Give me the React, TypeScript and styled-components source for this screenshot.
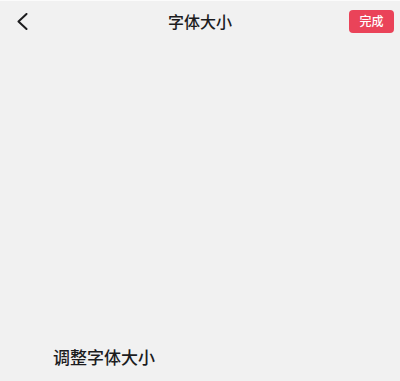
import styled, { createGlobalStyle } from 'styled-components';

const GlobalStyle = createGlobalStyle`
  html, body {
    margin: 0;
    padding: 0;
    background: #f1f1f1;
  }
  body {
    font-family: "Noto Sans CJK SC", "Noto Sans", sans-serif;
    color: #1c1c1e;
  }
`;

const Page = styled.div`
  width: 400px;
  height: 381px;
  box-sizing: border-box;
  border-top: 1px solid #fbfbfb;
  background: #f1f1f1;
  display: flex;
  flex-direction: column;
  overflow: hidden;
`;

const Header = styled.div`
  height: 40px;
  display: grid;
  grid-template-columns: 1fr auto 1fr;
  align-items: center;
  padding: 0 6px;
  box-sizing: border-box;
`;

const BackButton = styled.button`
  justify-self: start;
  margin-left: 7px;
  width: 18px;
  height: 24px;
  padding: 0;
  border: none;
  background: none;
  display: flex;
  align-items: center;
  justify-content: center;
  cursor: pointer;
`;

const Title = styled.h1`
  margin: 0;
  font-size: 16px;
  font-weight: 500;
  line-height: 1;
  color: #1c1c1e;
`;

const DoneButton = styled.button`
  justify-self: end;
  width: 45px;
  height: 23px;
  padding: 0;
  border: none;
  border-radius: 4px;
  background: #ea4359;
  color: #fff;
  font-family: inherit;
  font-size: 12px;
  font-weight: 500;
  line-height: 1;
  cursor: pointer;
`;

const Body = styled.div`
  flex: 1;
  display: flex;
  flex-direction: column;
  justify-content: flex-end;
  padding: 0 0 12px 53px;
`;

const Label = styled.div`
  font-size: 17px;
  font-weight: 500;
  line-height: 24px;
  color: #1c1c1e;
`;

export default function App() {
  return (
    <>
      <GlobalStyle />
      <Page>
        <Header>
          <BackButton aria-label="返回">
            <svg width="12" height="17" viewBox="0 0 12 17" fill="none">
              <path d="M10.5 1 L2.5 8.5 L10.5 16" stroke="#1c1c1e" strokeWidth="2" strokeLinecap="round" strokeLinejoin="round" />
            </svg>
          </BackButton>
          <Title>字体大小</Title>
          <DoneButton>完成</DoneButton>
        </Header>
        <Body>
          <Label>调整字体大小</Label>
        </Body>
      </Page>
    </>
  );
}
